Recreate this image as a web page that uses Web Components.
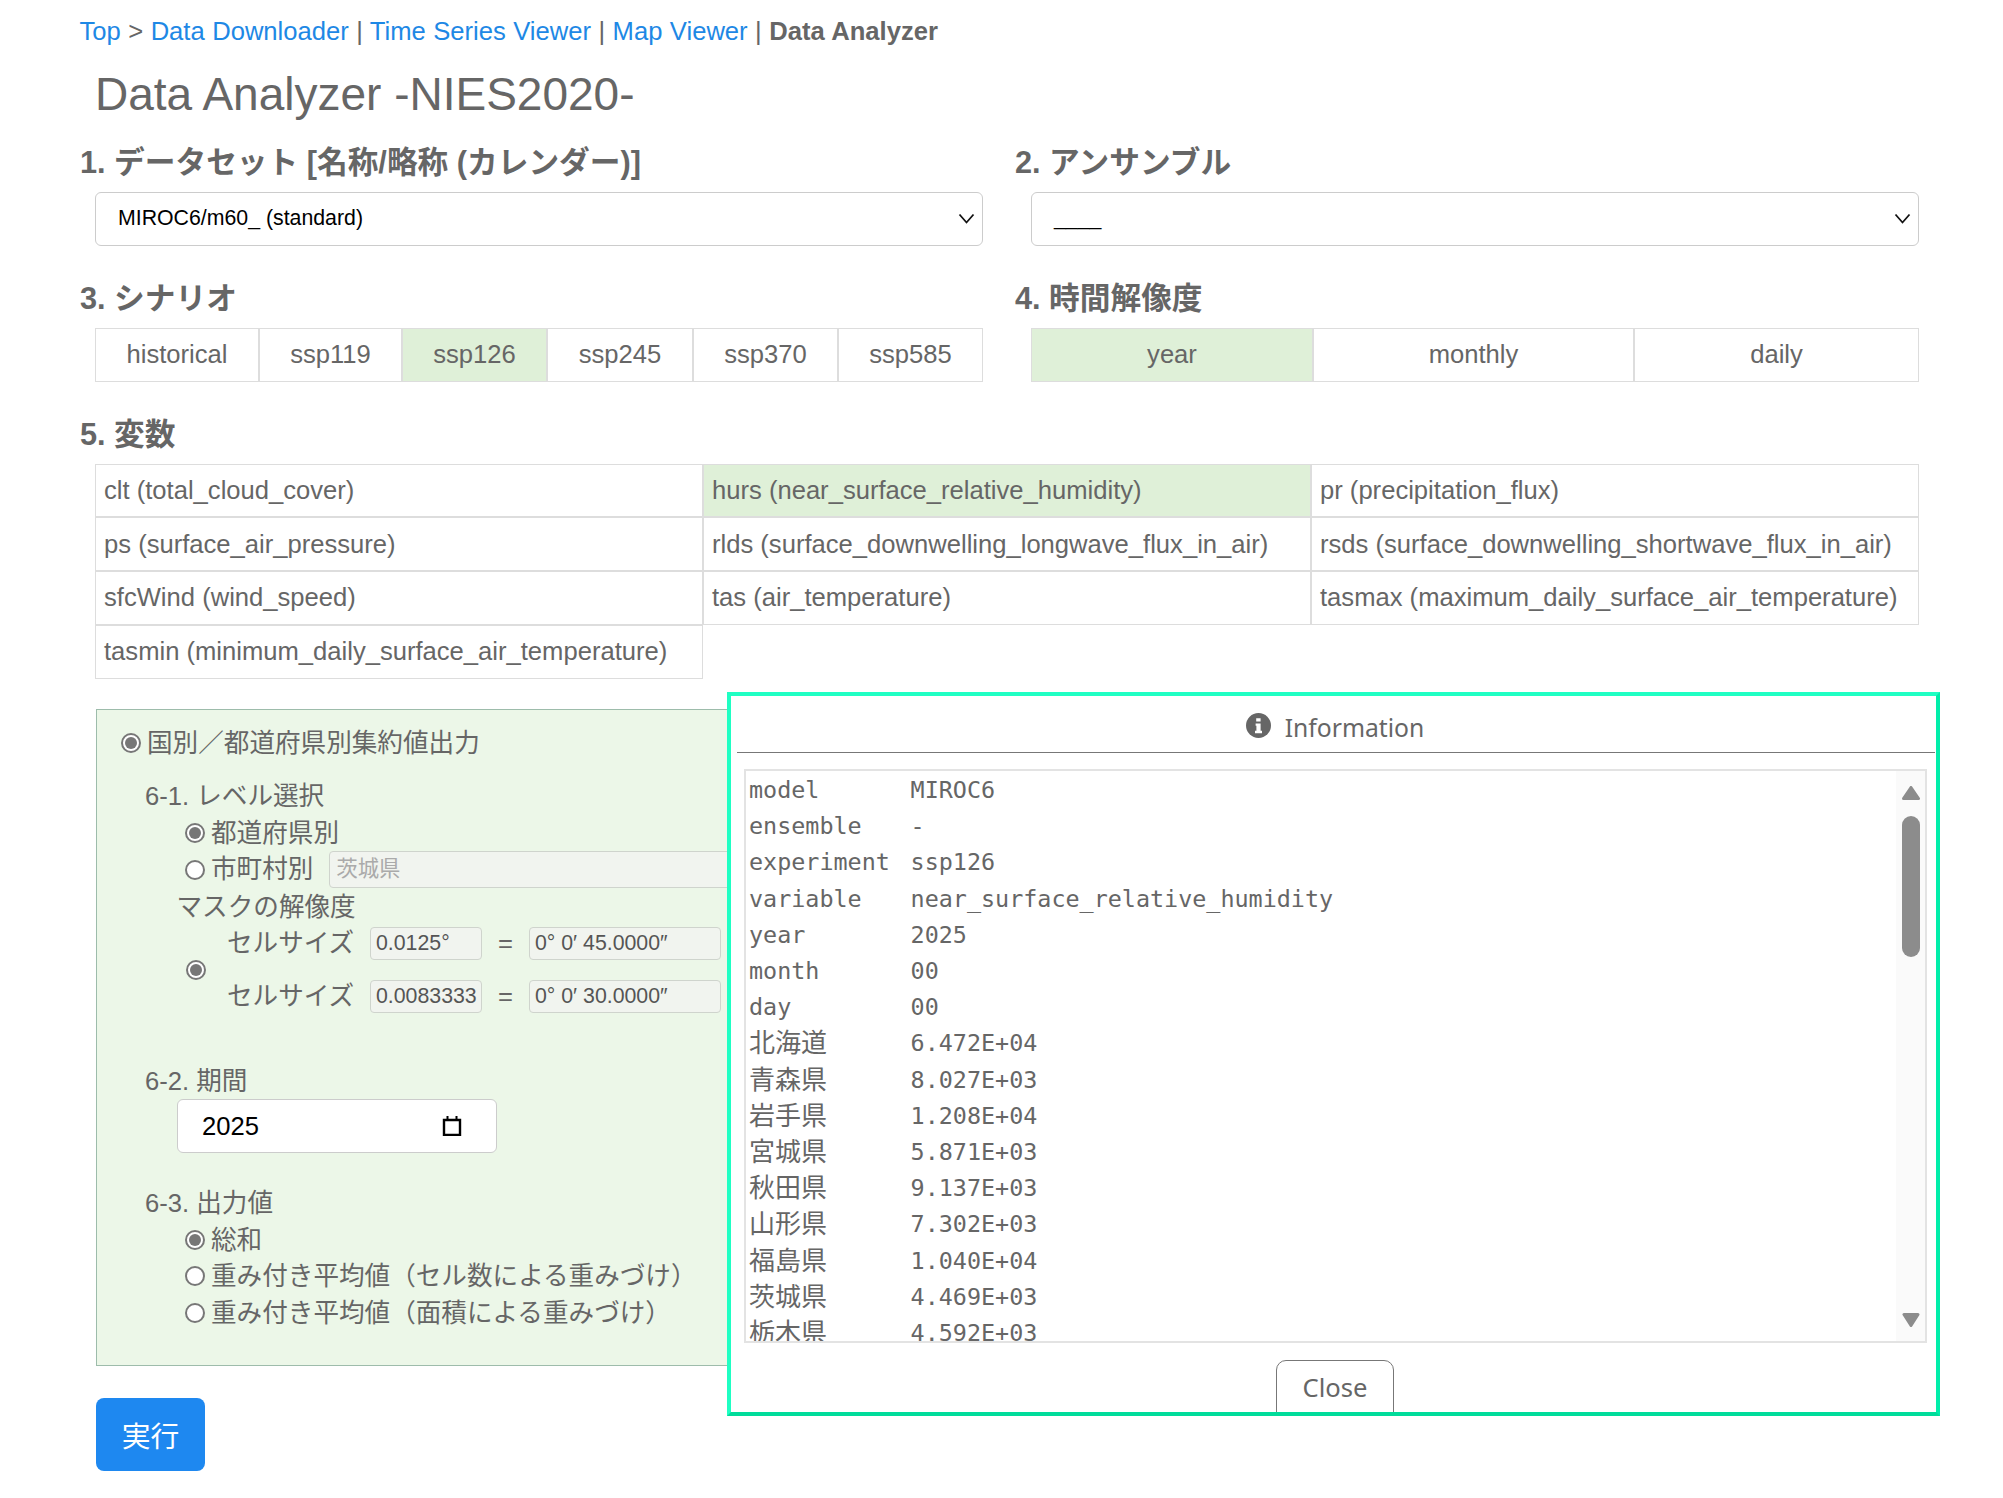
<!DOCTYPE html>
<html lang="ja">
<head>
<meta charset="utf-8">
<title>Data Analyzer</title>
<style>
  html, body { margin: 0; padding: 0; background: #fff; }
  body { font-family: "Liberation Sans", "Noto Sans CJK JP", sans-serif; font-size: 25.6px; color: #666; overflow: hidden; }
</style>
</head>
<body>
<analyzer-page>
  <crumb-nav></crumb-nav>
  <page-title>Data Analyzer -NIES2020-</page-title>

  <form-row>
    <form-field label="1. データセット [名称/略称 (カレンダー)]"><select-box>MIROC6/m60_ (standard)</select-box></form-field>
    <form-field right label="2. アンサンブル"><select-box>____</select-box></form-field>
  </form-row>

  <form-row>
    <form-field label="3. シナリオ">
      <seg-group columns="164px 143px 145px 146px 145px 1fr">
        <seg-item>historical</seg-item><seg-item>ssp119</seg-item><seg-item active>ssp126</seg-item><seg-item>ssp245</seg-item><seg-item>ssp370</seg-item><seg-item>ssp585</seg-item>
      </seg-group>
    </form-field>
    <form-field right label="4. 時間解像度">
      <seg-group columns="282px 321px 1fr">
        <seg-item active>year</seg-item><seg-item>monthly</seg-item><seg-item>daily</seg-item>
      </seg-group>
    </form-field>
  </form-row>

  <form-field label="5. 変数">
    <var-table>
      <var-cell>clt (total_cloud_cover)</var-cell>
      <var-cell active>hurs (near_surface_relative_humidity)</var-cell>
      <var-cell>pr (precipitation_flux)</var-cell>
      <var-cell>ps (surface_air_pressure)</var-cell>
      <var-cell>rlds (surface_downwelling_longwave_flux_in_air)</var-cell>
      <var-cell>rsds (surface_downwelling_shortwave_flux_in_air)</var-cell>
      <var-cell>sfcWind (wind_speed)</var-cell>
      <var-cell>tas (air_temperature)</var-cell>
      <var-cell>tasmax (maximum_daily_surface_air_temperature)</var-cell>
      <var-cell>tasmin (minimum_daily_surface_air_temperature)</var-cell>
    </var-table>
  </form-field>

  <region-panel></region-panel>
  <run-button>実行</run-button>
  <info-modal></info-modal>
</analyzer-page>

<script>
function open(el, html) {
  el.attachShadow({ mode: 'open' }).innerHTML = html;
}

class AnalyzerPage extends HTMLElement {
  connectedCallback() {
    open(this, `<style>
      :host { display: block; position: relative; width: 2003px; height: 1498px; padding: 12px 84px 0 80px; box-sizing: border-box; }
    </style><slot></slot>`);
  }
}

class CrumbNav extends HTMLElement {
  connectedCallback() {
    open(this, `<style>
      :host { display: block; line-height: 38px; height: 38px; white-space: nowrap; word-spacing: 0.35px; margin-left: -0.5px; }
      a { color: #1e88e5; text-decoration: none; }
      b { font-weight: bold; }
    </style><a href="#">Top</a> &gt; <a href="#">Data Downloader</a> | <a href="#">Time Series Viewer</a> | <a href="#">Map Viewer</a> | <b>Data Analyzer</b>`);
  }
}

class PageTitle extends HTMLElement {
  connectedCallback() {
    open(this, `<style>
      :host { display: block; font-size: 46px; line-height: 54px; margin: 17px 0 0 15px; }
    </style><slot></slot>`);
  }
}

class FormRow extends HTMLElement {
  connectedCallback() {
    open(this, `<style>
      :host { display: grid; grid-template-columns: 903px 904px; column-gap: 32px; }
    </style><slot></slot>`);
  }
}

class FormField extends HTMLElement {
  connectedCallback() {
    open(this, `<style>
      :host { display: block; padding: 23px 0 11px; }
      h5 { margin: 0 0 11px; font-size: 30.7px; line-height: 37px; font-weight: bold; }
      div { margin-left: 15px; }
      :host([right]) div { margin-left: 16px; }
    </style><h5>${this.getAttribute('label')}</h5><div><slot></slot></div>`);
  }
}

class SelectBox extends HTMLElement {
  connectedCallback() {
    open(this, `<style>
      :host { display: flex; align-items: center; justify-content: space-between; height: 54px; box-sizing: border-box; margin-top: -0.5px; padding: 0 7px 1px 22px; border: 1px solid #ccc; border-radius: 6px; font-size: 21.3px; color: #000; background: #fff; }
      svg { width: 17px; height: 11px; }
    </style><span><slot></slot></span>
    <svg viewBox="0 0 17 11"><path d="M1.500 1.500 8.500 9.500 15.500 1.500" fill="none" stroke="#111" stroke-width="1.800"/></svg>`);
  }
}

class SegGroup extends HTMLElement {
  connectedCallback() {
    open(this, `<style>
      :host { display: grid; grid-template-columns: ${this.getAttribute('columns')}; height: 54px; }
    </style><slot></slot>`);
  }
}

class SegItem extends HTMLElement {
  connectedCallback() {
    open(this, `<style>
      :host { display: flex; align-items: center; justify-content: center; box-sizing: border-box; padding-bottom: 1px; border: 1px solid #ddd; }
      :host([active]) { background: #dff0d8; }
    </style><slot></slot>`);
  }
}

class VarTable extends HTMLElement {
  connectedCallback() {
    open(this, `<style>
      :host { display: grid; grid-template-columns: repeat(3, 608px); grid-auto-rows: 53.8px; }
    </style><slot></slot>`);
  }
}

class VarCell extends HTMLElement {
  connectedCallback() {
    open(this, `<style>
      :host { display: flex; align-items: center; box-sizing: border-box; padding-left: 8px; border: 1px solid #ddd; white-space: nowrap; }
      :host([active]) { background: #dff0d8; }
    </style><slot></slot>`);
  }
}

class RadioRow extends HTMLElement {
  connectedCallback() {
    open(this, `<style>
      :host { display: flex; align-items: center; height: 36.5px; white-space: nowrap; }
      i { flex: none; width: 20px; height: 20px; box-sizing: border-box; border: 2px solid #777; border-radius: 50%; background: #fff; margin-right: 6px; display: flex; align-items: center; justify-content: center; }
      :host([checked]) i::after { content: ""; width: 12px; height: 12px; border-radius: 50%; background: #777; }
    </style><i></i><slot></slot>`);
  }
}

class CellSize extends HTMLElement {
  connectedCallback() {
    open(this, `<style>
      :host { display: flex; align-items: center; height: 33px; white-space: nowrap; }
      span.lbl { width: 143px; }
      span.eq { width: 47px; text-align: center; }
      .inp { box-sizing: border-box; height: 33px; line-height: 31px; padding: 0 5px; border: 1px solid #cfd4cd; border-radius: 4px; background: #f1f4ef; font-size: 21.3px; color: #555; overflow: hidden; }
      .a { width: 112px; }
      .b { width: 192px; }
    </style><span class="lbl">セルサイズ</span><div class="inp a">${this.getAttribute('deg')}</div><span class="eq">=</span><div class="inp b">${this.getAttribute('dms')}</div>`);
  }
}

class RegionPanel extends HTMLElement {
  connectedCallback() {
    open(this, `<style>
      :host { display: block; box-sizing: border-box; height: 657px; margin: 19px 0 0 16px; padding: 15px 0 0 24px; background: #ecf7e8; border: 1px solid #9dbcab; line-height: 36.5px; }
      .head { margin-top: 17px; margin-left: 24px; }
      .opts { margin-left: 64px; }
      .city { display: flex; align-items: center; }
      .city div { box-sizing: border-box; flex: 1; height: 37px; line-height: 35px; margin-left: 16px; padding-left: 6px; border: 1px solid #cfd4cd; border-radius: 4px; background: #f1f4ef; font-size: 21.3px; color: #aaa; }
      .mask { margin: 1px 0 0 55.5px; }
      .cells { display: flex; align-items: center; margin: 1px 0 0 65px; }
      .cells radio-row { margin-top: 1px; }
      .cells > div { margin-left: 15px; display: grid; row-gap: 20px; }
      .year { box-sizing: border-box; display: flex; align-items: center; justify-content: space-between; width: 320px; height: 54px; margin: 0 0 0 56px; padding: 0 34px 0 24px; background: #fff; border: 1px solid #ccc; border-radius: 6px; color: #000; }
      .year svg { width: 20px; height: 20px; }
    </style>
    <radio-row checked>国別／都道府県別集約値出力</radio-row>
    <div class="head">6-1. レベル選択</div>
    <div class="opts">
      <radio-row checked>都道府県別</radio-row>
      <div class="city"><radio-row>市町村別</radio-row><div>茨城県</div></div>
    </div>
    <div class="mask">マスクの解像度</div>
    <div class="cells">
      <radio-row checked></radio-row>
      <div>
        <cell-size deg="0.0125°" dms="0° 0′ 45.0000″"></cell-size>
        <cell-size deg="0.0083333" dms="0° 0′ 30.0000″"></cell-size>
      </div>
    </div>
    <div class="head" style="margin-top:50px">6-2. 期間</div>
    <div class="year">2025
      <svg viewBox="0 0 20 20"><path d="M2 4h16v15H2z" fill="none" stroke="#000" stroke-width="2.400"/><path d="M5.500 0v4M14.500 0v4" stroke="#000" stroke-width="2"/></svg>
    </div>
    <div class="head" style="margin-top:32px">6-3. 出力値</div>
    <div class="opts">
      <radio-row checked>総和</radio-row>
      <radio-row>重み付き平均値（セル数による重みづけ）</radio-row>
      <radio-row>重み付き平均値（面積による重みづけ）</radio-row>
    </div>`);
  }
}

class RunButton extends HTMLElement {
  connectedCallback() {
    open(this, `<style>
      :host { display: flex; align-items: center; justify-content: center; width: 109px; height: 73px; margin: 32px 0 0 16px; border-radius: 8px; background: #1e88f0; color: #fff; font-size: 28.8px; }
    </style><slot></slot>`);
  }
}

const infoRows = [
  ['model', 'MIROC6'], ['ensemble', '-'], ['experiment', 'ssp126'],
  ['variable', 'near_surface_relative_humidity'], ['year', '2025'], ['month', '00'], ['day', '00'],
  ['北海道', '6.472E+04'], ['青森県', '8.027E+03'], ['岩手県', '1.208E+04'], ['宮城県', '5.871E+03'],
  ['秋田県', '9.137E+03'], ['山形県', '7.302E+03'], ['福島県', '1.040E+04'], ['茨城県', '4.469E+03'], ['栃木県', '4.592E+03']
];

class InfoModal extends HTMLElement {
  connectedCallback() {
    const rows = infoRows.map(r => `<span class="${/^[a-z]/.test(r[0]) ? 'k' : 'k cjk'}">${r[0]}</span><span>${r[1]}</span>`).join('');
    open(this, `<style>
      :host { position: absolute; left: 727px; top: 692px; width: 1213px; height: 724px; box-sizing: border-box; display: flex; flex-direction: column; overflow: hidden; background: #fff; border: 4px solid; border-color: #1fffc3 #00eeaa #00dc9a #1fffc3; font-family: "Noto Sans", "Noto Sans CJK JP", sans-serif; }
      header { flex: none; display: flex; align-items: center; justify-content: center; gap: 14px; height: 50px; padding: 6px 2px 0 0; margin: 0 1px 0 6px; border-bottom: 1px solid #777; box-sizing: content-box; font-size: 24.7px; }
      header svg { width: 25px; height: 25px; position: relative; top: -2px; }
      .box { flex: none; display: flex; height: 574px; box-sizing: border-box; margin: 16px 9px 0 13px; border: 2px solid #e3e3e3; overflow: hidden; }
      .list { flex: 1; display: grid; grid-template-columns: 161.6px 1fr; grid-auto-rows: 36.2px; align-items: center; padding: 1px 0 0 3px; overflow: hidden; font-family: "DejaVu Sans Mono", "Noto Sans CJK JP", monospace; font-size: 23.4px; }
      .cjk { font-family: "Noto Sans CJK JP", sans-serif; font-size: 26px; padding-bottom: 4px; line-height: 32px; }
      .bar { flex: none; width: 29px; box-sizing: border-box; padding: 15px 5px 14px 6px; background: #fafafa; display: flex; flex-direction: column; }
      .bar svg { width: 18px; height: 14px; flex: none; }
      .thumb { height: 141px; margin: 16px 0 auto; background: #8c8c8c; border-radius: 9px; }
      button { display: block; flex: none; width: 118px; height: 64px; margin: 17px auto 0; padding: 0 0 10px 1px; position: relative; left: 1px; background: #fff; border: 1px solid #777; border-radius: 10px; font: inherit; font-size: 25.6px; color: #666; }
    </style>
    <header>
      <svg viewBox="0 0 25 25"><circle cx="12.500" cy="12.500" r="12.500" fill="#666"/><path d="M10.200 5.200h4.400v3.400h-4.400zM9.600 10.400h5v7.400h1.400v2.400H9v-2.400h1.400v-5H9.600z" fill="#fff"/></svg>
      Information
    </header>
    <div class="box">
      <div class="list">${rows}</div>
      <div class="bar">
        <svg viewBox="0 0 18 14"><path d="M9 1.500 16.500 12.500H1.500z" fill="#8c8c8c" stroke="#8c8c8c" stroke-width="3" stroke-linejoin="round"/></svg>
        <div class="thumb"></div>
        <svg viewBox="0 0 18 14"><path d="M2 1.500H16L9 12.500z" fill="#8c8c8c" stroke="#8c8c8c" stroke-width="3" stroke-linejoin="round"/></svg>
      </div>
    </div>
    <button>Close</button>`);
  }
}

customElements.define('radio-row', RadioRow);
customElements.define('cell-size', CellSize);
customElements.define('analyzer-page', AnalyzerPage);
customElements.define('crumb-nav', CrumbNav);
customElements.define('page-title', PageTitle);
customElements.define('form-row', FormRow);
customElements.define('form-field', FormField);
customElements.define('select-box', SelectBox);
customElements.define('seg-group', SegGroup);
customElements.define('seg-item', SegItem);
customElements.define('var-table', VarTable);
customElements.define('var-cell', VarCell);
customElements.define('region-panel', RegionPanel);
customElements.define('run-button', RunButton);
customElements.define('info-modal', InfoModal);
</script>
</body>
</html>
